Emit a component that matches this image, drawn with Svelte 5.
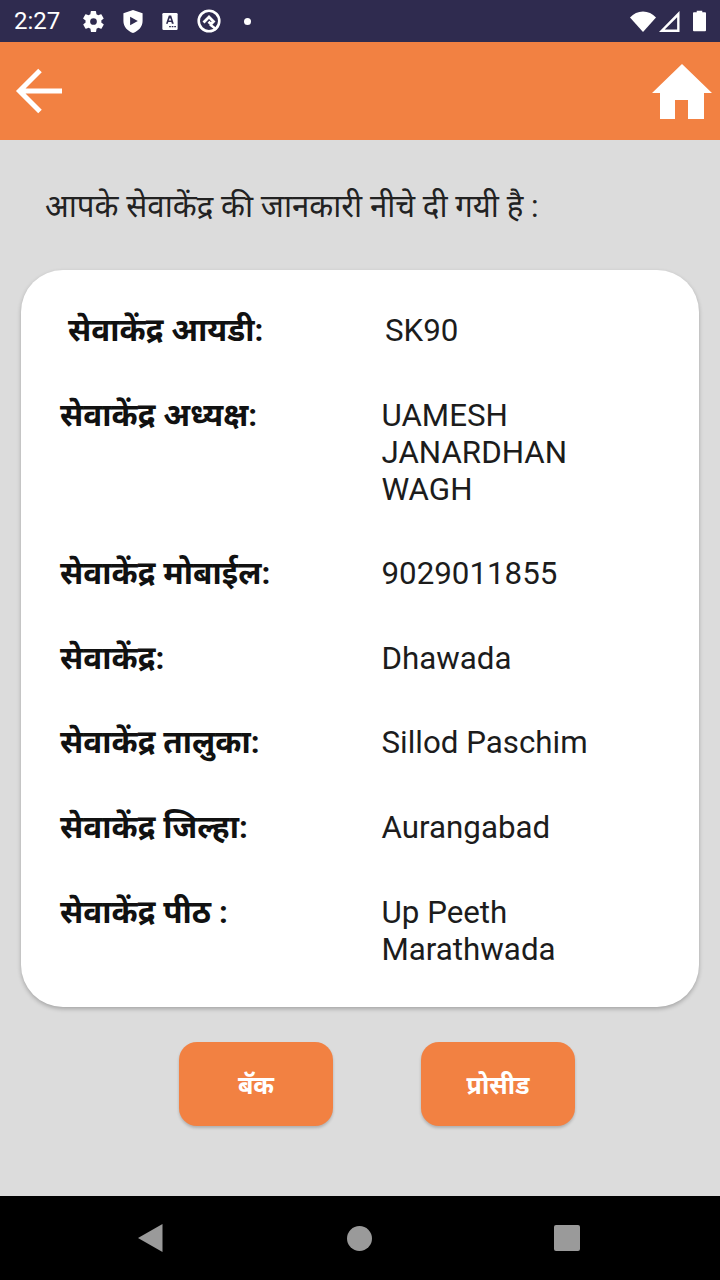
<script>
    const rows = [
        { label: 'सेवाकेंद्र अध्यक्ष:', value: ['UAMESH', 'JANARDHAN', 'WAGH'] },
        { label: 'सेवाकेंद्र मोबाईल:', value: ['9029011855'] },
        { label: 'सेवाकेंद्र:', value: ['Dhawada'] },
        { label: 'सेवाकेंद्र तालुका:', value: ['Sillod Paschim'] },
        { label: 'सेवाकेंद्र जिल्हा:', value: ['Aurangabad'] },
        { label: 'सेवाकेंद्र पीठ :', value: ['Up Peeth', 'Marathwada'] }
    ];
</script>

<div class="screen">
    <div class="status-bar">
        <span class="clock">2:27</span>
        <div class="status-icons">
            <svg width="21" height="21" viewBox="2 2 20 20"><path fill="#fff" fill-rule="evenodd" d="M19.400 13c.1-.3.1-.7.1-1s0-.7-.1-1l2.100-1.600c.2-.2.2-.4.1-.6l-2-3.500c-.1-.2-.4-.3-.6-.2l-2.500 1c-.5-.4-1.100-.7-1.700-1l-.4-2.600c0-.3-.2-.5-.5-.5h-4c-.3 0-.5.200-.5.500l-.4 2.600c-.6.300-1.200.6-1.700 1l-2.500-1c-.2-.1-.5 0-.6.200l-2 3.500c-.1.200-.1.400.1.600L4.500 11c-.1.300-.1.700-.1 1s0 .7.1 1l-2.100 1.600c-.2.200-.2.400-.1.600l2 3.500c.1.200.4.300.6.200l2.500-1c.5.400 1.100.7 1.700 1l.4 2.600c0 .3.2.5.5.5h4c.3 0 .5-.2.500-.5l.4-2.600c.6-.3 1.200-.6 1.700-1l2.500 1c.2.100.5 0 .6-.2l2-3.500c.1-.2.1-.4-.1-.6zM12 15.200a3.200 3.200 0 1 1 0-6.400 3.200 3.200 0 0 1 0 6.400z"/></svg>
            <svg width="20" height="23" viewBox="1 1 20 24"><path fill="#fff" fill-rule="evenodd" d="M11 1l10 3.500v8c0 6-4.200 10.500-10 12.500C5.200 23 1 18.500 1 12.500v-8zM8 8v9l8-4.500z"/></svg>
            <svg width="16" height="17" viewBox="0 0 18 20"><rect width="18" height="20" rx="1.500" fill="#fff"/><path fill="#2f2b4f" fill-rule="evenodd" d="M7.600 3h2.800l3.100 9.500h-2.300l-.6-2H7l-.6 2H4.300zM9 5.500L7.500 8.800h3z"/><path stroke="#2f2b4f" stroke-width="1.600" stroke-dasharray="2 1" d="M8 16h8"/></svg>
            <svg class="q-icon" width="24" height="24" viewBox="0 0 24 24"><g fill="none" stroke="#fff"><circle cx="12" cy="12" r="10.300" stroke-width="2.600"/><path stroke-width="2.800" d="M6.500 13.500L12 8l4.500 4.500-2.500 2.500-2.500-2.200"/><path stroke-width="2.400" d="M13 15.500l6.500 5"/></g></svg>
            <span class="dot"></span>
        </div>
        <div class="status-right">
            <svg class="wifi" width="26" height="21" viewBox="0 0 26 21"><path fill="#fff" d="M13 21L0 6.500C3.500 2.800 8 .5 13 .5s9.500 2.300 13 6z"/></svg>
            <svg class="signal" width="21" height="21" viewBox="0 0 22 22"><path fill="#fff" fill-rule="evenodd" d="M21.500 0v22H0zM19 6.500L6 19.500h13z"/></svg>
            <svg width="13" height="22" viewBox="0 0 14 22"><path fill="#fff" d="M4 1.500V0h6v1.500h3a1 1 0 0 1 1 1V21a1 1 0 0 1-1 1H1a1 1 0 0 1-1-1V2.500a1 1 0 0 1 1-1z"/></svg>
        </div>
    </div>

    <div class="app-bar">
        <svg width="48" height="48" viewBox="0 0 48 48"><path fill="none" stroke="#fff" stroke-width="5" d="M48 24H6M26 3.500L5.500 24 26 44.500"/></svg>
        <svg width="60" height="55" viewBox="0 0 60 55"><path fill="#fff" d="M30 0l30 29h-8v26H36V36H23v19H8V29H0z"/></svg>
    </div>

    <main class="content">
        <p class="intro">आपके सेवाकेंद्र की जानकारी नीचे दी गयी है :</p>

        <section class="card">
            <div class="row first">
                <div class="label">सेवाकेंद्र आयडी:</div>
                <div class="value">SK90</div>
            </div>
            {#each rows as row}
                <div class="row">
                    <div class="label">{row.label}</div>
                    <div class="value">
                        {#each row.value as line}<div>{line}</div>{/each}
                    </div>
                </div>
            {/each}
        </section>

        <div class="actions">
            <button class="btn">बॅक</button>
            <button class="btn">प्रोसीड</button>
        </div>
    </main>

    <div class="nav-bar">
        <svg width="26" height="30" viewBox="0 0 26 30"><path fill="#9a9a9a" d="M25.500 1v28L1 15z"/></svg>
        <span class="nav-home"></span>
        <span class="nav-square"></span>
    </div>
</div>

<style>
    :global(body) {
        margin: 0;
        background: #dcdcdc;
    }

    .screen {
        width: 720px;
        height: 1280px;
        display: flex;
        flex-direction: column;
        overflow: hidden;
        font-family: Roboto, "Noto Sans", "Noto Sans Devanagari", "Lohit Devanagari", sans-serif;
    }

    .status-bar {
        height: 42px;
        flex: none;
        display: flex;
        align-items: center;
        background: #2f2b4f;
        color: #fff;
        padding: 0 14px;
        box-sizing: border-box;
    }

    .clock {
        font-size: 24px;
        width: 69px;
    }

    .status-icons {
        display: flex;
        align-items: center;
        gap: 19px;
        flex: 1;
    }

    .dot {
        width: 7px;
        height: 7px;
        border-radius: 50%;
        background: #fff;
        margin-left: 4px;
    }

    .status-right {
        display: flex;
        align-items: center;
    }

    .wifi {
        margin-right: 3px;
    }

    .signal {
        margin-right: 13px;
    }

    .app-bar {
        height: 98px;
        flex: none;
        display: flex;
        align-items: center;
        justify-content: space-between;
        background: #f28142;
        padding: 0 8px 0 14px;
        box-sizing: border-box;
    }

    .content {
        flex: 1;
        background: #dcdcdc;
        display: flex;
        flex-direction: column;
    }

    .intro {
        margin: 46px 0 42px 45px;
        font-size: 31.2px;
        line-height: 42px;
        color: #222;
    }

    .card {
        margin: 0 21px;
        height: 737px;
        box-sizing: border-box;
        padding: 42px 0 0 39px;
        background: #fff;
        border-radius: 42px;
        box-shadow: 0 2px 4px rgba(0, 0, 0, 0.25);
    }

    .row {
        display: grid;
        grid-template-columns: 321.5px 1fr;
        margin-bottom: 47.6px;
        font-size: 31.3px;
        line-height: 37px;
    }

    .row.first {
        padding-left: 8px;
        grid-template-columns: 317px 1fr;
    }

    .label {
        font-size: 31.5px;
        font-weight: 700;
        color: #111;
    }

    .value {
        color: #1c1c1c;
    }

    .actions {
        display: flex;
        gap: 88px;
        margin: 35px 0 0 179px;
    }

    .btn {
        width: 154px;
        height: 84px;
        border: none;
        border-radius: 18px;
        background: #f28142;
        color: #fff;
        font-family: inherit;
        font-size: 25px;
        font-weight: 700;
        box-shadow: 0 2px 3px rgba(0, 0, 0, 0.2);
    }

    .nav-bar {
        height: 84px;
        flex: none;
        background: #000;
        display: grid;
        grid-template-columns: 151px 209px 207px;
        justify-content: start;
        align-items: center;
    }

    .nav-bar svg {
        justify-self: end;
        margin-right: -12px;
    }

    .nav-home {
        width: 25px;
        height: 25px;
        border-radius: 50%;
        background: #9a9a9a;
        justify-self: end;
        margin-right: -12px;
    }

    .nav-square {
        width: 26px;
        height: 26px;
        border-radius: 2px;
        background: #9a9a9a;
        justify-self: end;
        margin-right: -13px;
    }
</style>
